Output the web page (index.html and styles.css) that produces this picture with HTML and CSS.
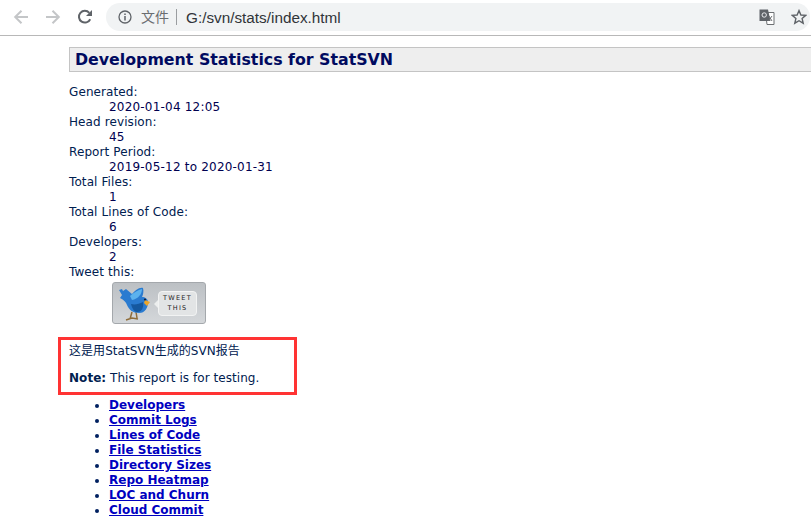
FILE: index.html
```html
<!DOCTYPE html>
<html lang="zh">
<head>
<meta charset="utf-8">
<title>Development Statistics for StatSVN</title>
<link rel="stylesheet" href="styles.css">
</head>
<body>
<header class="toolbar">
  <svg class="nav-icon" width="16" height="16" viewBox="0 0 16 16"><path d="M15 8H2.5M8.5 1.7 2.2 8l6.3 6.3" fill="none" stroke="#c4c6c8" stroke-width="2"/></svg>
  <svg class="nav-icon" width="16" height="16" viewBox="0 0 16 16"><path d="M1 8h12.5M7.5 1.7 13.8 8l-6.3 6.3" fill="none" stroke="#c4c6c8" stroke-width="2"/></svg>
  <svg class="nav-icon" width="16" height="16" viewBox="0 0 16 16"><path d="M13.2 10.2A5.9 5.9 0 1 1 12.3 3.8" fill="none" stroke="#5f6368" stroke-width="2"/><path d="M15 1v6H9z" fill="#5f6368"/></svg>
  <div class="omnibox">
    <svg class="info" width="14" height="14" viewBox="0 0 14 14"><circle cx="7" cy="7" r="6" fill="none" stroke="#5f6368" stroke-width="1.3"/><path d="M7 6v4.4M7 3.4v1.5" stroke="#5f6368" stroke-width="1.5"/></svg>
    <span class="scheme">文件</span>
    <span class="sep"></span>
    <span class="url">G:/svn/stats/index.html</span>
    <svg class="translate" width="16" height="16" viewBox="0 0 16 16"><path d="M6.500 3.500h8.500v12H8z" fill="#fff" stroke="#6d7073"/><path d="M0.500 0.500H9L11.500 12H0.500z" fill="#5f6368"/><circle cx="5.200" cy="6" r="2.200" fill="none" stroke="#e8eaed"/><path d="M10 7l3 5M13 7l-3.500 5" stroke="#6d7073"/></svg>
    <svg class="star" width="16" height="16" viewBox="0 0 16 16"><path d="M8 1.600l1.900 4.400 4.800.4-3.600 3.100 1.100 4.700L8 11.700l-4.200 2.500 1.100-4.700L1.300 6.400l4.800-.4z" fill="none" stroke="#5f6368" stroke-width="1.400"/></svg>
  </div>
</header>
<main class="page">
  <h1 class="title">Development Statistics for StatSVN</h1>
  <dl class="facts">
    <dt>Generated:</dt><dd>2020-01-04 12:05</dd>
    <dt>Head revision:</dt><dd>45</dd>
    <dt>Report Period:</dt><dd>2019-05-12 to 2020-01-31</dd>
    <dt>Total Files:</dt><dd>1</dd>
    <dt>Total Lines of Code:</dt><dd>6</dd>
    <dt>Developers:</dt><dd>2</dd>
    <dt>Tweet this:</dt>
    <dd>
      <div class="tweet">
        <svg class="bird" width="36" height="36" viewBox="0 0 36 36">
          <path d="M14 27l-2 7M18 27l1 6M8 35l6-2 6 1" stroke="#8f6d3a" stroke-width="1.500" fill="none"/>
          <path d="M1 5l3-1 1 2 3-2 6 5C17 6 21 2 25 3c1 3 0 7-1 9 3 0 6 2 6 5 0 6-3 11-9 11-6 0-10-3-12-8-1-3-3-5-7-7l2-3z" fill="#2a7bd0"/>
          <path d="M12 11c3-3 8-6 12-7 0 5-4 10-10 11z" fill="#5cb2ee"/>
          <path d="M13 19c4 1 8 0 12-2 1 5-1 10-6 10-3 0-5-4-6-8z" fill="#15589f"/>
          <path d="M27 15l5 2-3 4-3-3z" fill="#eba62a"/>
          <circle cx="27" cy="14.500" r="1.100" fill="#0f1f3f"/>
        </svg>
        <div class="bubble"><span>TWEET</span><span>THIS</span></div>
      </div>
    </dd>
  </dl>
  <section class="notes">
    <p>这是用StatSVN生成的SVN报告</p>
    <p><strong>Note:</strong> This report is for testing.</p>
  </section>
  <ul class="links">
    <li><a href="#">Developers</a></li>
    <li><a href="#">Commit Logs</a></li>
    <li><a href="#">Lines of Code</a></li>
    <li><a href="#">File Statistics</a></li>
    <li><a href="#">Directory Sizes</a></li>
    <li><a href="#">Repo Heatmap</a></li>
    <li><a href="#">LOC and Churn</a></li>
    <li><a href="#">Cloud Commit</a></li>
  </ul>
  <div class="highlight"></div>
</main>
</body>
</html>
```
FILE: styles.css
```css
html, body {
  margin: 0;
  padding: 0;
  height: 100%;
  overflow: hidden;
  background: #fff;
}
body {
  font-family: "DejaVu Sans", "Noto Sans CJK SC", sans-serif;
  font-size: 12px;
  line-height: 15px;
  color: #000050;
}
.toolbar {
  box-sizing: border-box;
  height: 36px;
  display: flex;
  align-items: center;
  border-bottom: 1px solid #b8b8b8;
  padding: 0 1px 1px 13px;
}
.nav-icon {
  margin-right: 16px;
  flex: none;
}
.nav-icon:nth-child(3) {
  margin-right: 13px;
}
.omnibox {
  flex: 1;
  height: 28px;
  background: #f1f3f4;
  border-radius: 14px;
  display: flex;
  align-items: center;
  padding-left: 12px;
  font-family: "Liberation Sans", "Noto Sans CJK SC", sans-serif;
}
.info {
  flex: none;
  margin-right: 9px;
}
.scheme {
  font-size: 14px;
  color: #6a6d70;
}
.sep {
  width: 1px;
  height: 16px;
  background: #9a9da0;
  margin: 0 9px 0 7px;
}
.url {
  font-size: 15.300px;
  color: #303438;
  flex: 1;
}
.translate {
  flex: none;
  margin-right: 16px;
}
.star {
  flex: none;
  margin-right: 3px;
}
.page {
  position: relative;
  padding: 11px 0 0 69px;
}
.title {
  margin: 0;
  box-sizing: border-box;
  height: 25px;
  padding-left: 5px;
  border: 1px solid #c4c4c4;
  border-right: 0;
  background: #eee;
  font-size: 15.800px;
  line-height: 24px;
  font-weight: bold;
  color: #000a60;
}
.facts {
  margin: 13px 0 0;
}
.facts dt {
  font-weight: normal;
  color: #002050;
  letter-spacing: 0.1px;
}
.facts dd {
  margin: 0 0 0 40px;
  color: #000050;
  letter-spacing: 0.2px;
}
.tweet {
  box-sizing: border-box;
  width: 94px;
  height: 42px;
  margin: 2px 0 0 3px;
  display: flex;
  align-items: center;
  gap: 4px;
  padding-left: 5px;
  border: 1px solid #a4a8ac;
  border-radius: 3px;
  background: linear-gradient(#bcc0c4, #d4d7da);
}
.bird {
  flex: none;
}
.bubble {
  position: relative;
  width: 39px;
  height: 25px;
  display: flex;
  flex-direction: column;
  align-items: center;
  justify-content: center;
  background: #e2e4e5;
  border: 1px solid #f2f3f3;
  border-radius: 4px;
  box-sizing: border-box;
  font-size: 6.500px;
  line-height: 10px;
  letter-spacing: 1.300px;
  color: #222;
}
.bubble::before {
  content: "";
  position: absolute;
  left: -5px;
  top: 8px;
  border-style: solid;
  border-width: 4px 4px 4px 0;
  border-color: transparent #eceeee transparent transparent;
}
.notes {
  margin-top: 20px;
}
.notes p {
  margin: 0 0 12px;
  color: #002050;
  letter-spacing: 0.05px;
}
.links {
  margin: 0;
  padding-left: 40px;
}
.links li {
  font-weight: bold;
  color: #002060;
}
.links a {
  color: #0000c0;
  text-decoration: underline;
}
.highlight {
  position: absolute;
  left: 58px;
  top: 301px;
  width: 233px;
  height: 52px;
  border: 3px solid #f33;
}
```
